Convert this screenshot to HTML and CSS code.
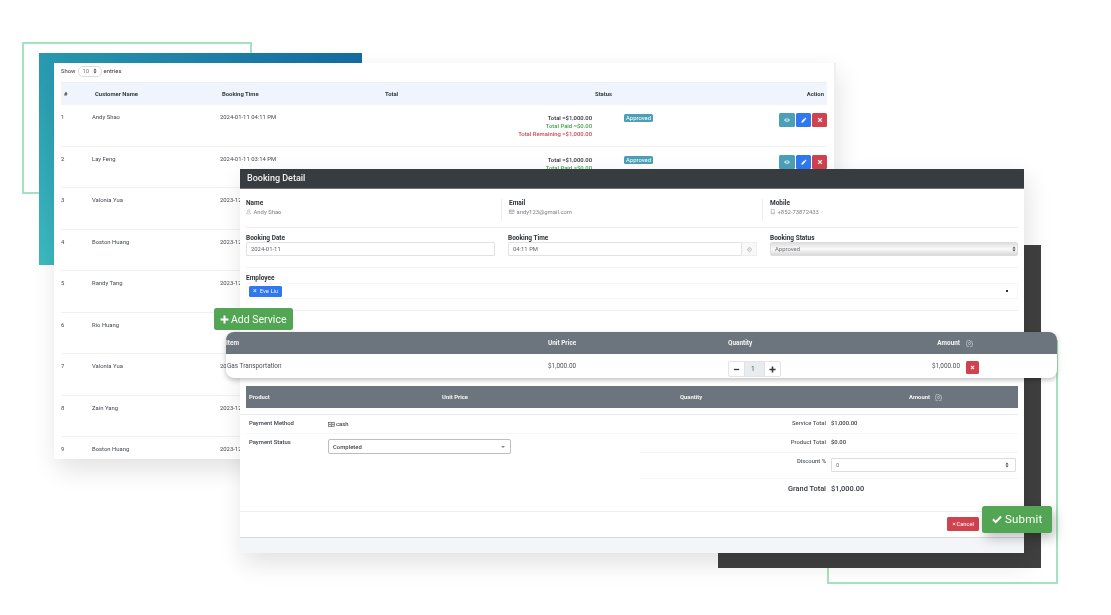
FILE: index.html
```html
<!DOCTYPE html>
<html lang="en">
<head>
    <meta charset="UTF-8">
    <meta name="viewport" content="width=device-width, initial-scale=1.0">
    <title>Booking Detail</title>
    <link rel="stylesheet" href="styles.css">
</head>
<body>
    <svg class="icon-defs" width="0" height="0">
        <symbol id="i-eye" viewBox="0 0 16 16"><path fill="currentColor" d="M8 3C4.4 3 1.6 5.4 0 8c1.6 2.600 4.400 5 8 5s6.400-2.400 8-5c-1.600-2.600-4.400-5-8-5zm0 8.400A3.400 3.400 0 1 1 8 4.600a3.400 3.400 0 0 1 0 6.800zM8 6a2 2 0 1 0 0 4 2 2 0 0 0 0-4z"/></symbol>
        <symbol id="i-pen" viewBox="0 0 16 16"><path fill="currentColor" d="M11.300 1.300l3.400 3.400-1.700 1.700-3.400-3.400zM8.500 4.100l3.400 3.400-7 7L1 15l.5-3.900z"/></symbol>
        <symbol id="i-x" viewBox="0 0 16 16"><path fill="none" stroke="currentColor" stroke-width="3.400" d="M3 3l10 10M13 3L3 13"/></symbol>
        <symbol id="i-plus" viewBox="0 0 16 16"><path fill="none" stroke="currentColor" stroke-width="3.600" d="M8 1v14M1 8h14"/></symbol>
        <symbol id="i-minus" viewBox="0 0 16 16"><path fill="none" stroke="currentColor" stroke-width="3" d="M2 8h12"/></symbol>
        <symbol id="i-check" viewBox="0 0 16 16"><path fill="none" stroke="currentColor" stroke-width="3.200" d="M1.500 8.500l4.500 4.500 8.500-9"/></symbol>
        <symbol id="i-gear" viewBox="0 0 16 16"><g fill="none" stroke="currentColor" stroke-width="1.300"><circle cx="8" cy="8" r="2.400"/><path d="M6.800 1h2.400l.4 2 1.500.7 1.800-1.100 1.600 1.700-1.100 1.700.6 1.500 2 .5v2.200l-2 .5-.6 1.500 1.100 1.700-1.600 1.700-1.800-1.100-1.500.7-.4 2H6.800l-.4-2-1.500-.7-1.800 1.100-1.600-1.700 1.100-1.700-.6-1.500-2-.5V6.500l2-.5.6-1.500L1.500 2.800 3.100 1.100l1.800 1.100L6.400 1.500z"/></g></symbol>
        <symbol id="i-user" viewBox="0 0 16 16"><g fill="none" stroke="currentColor" stroke-width="1.200"><circle cx="8" cy="5" r="3.400"/><path d="M1.500 15c.3-3.400 2.600-5 4.600-5.300M14.500 15c-.3-3.400-2.600-5-4.600-5.300M1.500 15h13"/></g></symbol>
        <symbol id="i-mail" viewBox="0 0 16 16"><g fill="none" stroke="currentColor" stroke-width="1.300"><rect x="1" y="3" width="14" height="10"/><path d="M1 6h14M1 6l7 4 7-4"/></g></symbol>
        <symbol id="i-phone" viewBox="0 0 16 16"><g fill="none" stroke="currentColor" stroke-width="1.300"><rect x="3.500" y="1" width="9" height="14" rx="1"/><path d="M3.500 12h9"/></g></symbol>
        <symbol id="i-clock" viewBox="0 0 16 16"><g fill="none" stroke="currentColor" stroke-width="1.400"><circle cx="8" cy="8" r="6"/><path d="M5 8h3.500V5"/></g></symbol>
        <symbol id="i-cash" viewBox="0 0 16 16"><g fill="none" stroke="currentColor" stroke-width="1.300"><rect x="1" y="3" width="14" height="10"/><path d="M8 3v10"/><circle cx="4.500" cy="8" r="1.500"/><circle cx="11.500" cy="8" r="1.500"/></g></symbol>
        <symbol id="i-updown" viewBox="0 0 8 12"><path fill="currentColor" d="M4 1l3 4H1zM4 11L1 7h6z"/></symbol>
    </svg>

    <div class="stage">
        <div class="outline outline-top"></div>
        <div class="gradient-block"></div>
        <div class="outline outline-bottom"></div>

        <div class="list-window">
            <div class="length-row">
                Show
                <span class="length-select">10 <svg class="arrows"><use href="#i-updown"/></svg></span>
                entries
            </div>
            <table class="booking-table">
                <colgroup>
                    <col class="col-num"><col class="col-name"><col class="col-time">
                    <col class="col-total"><col class="col-status"><col class="col-action">
                </colgroup>
                <thead>
                    <tr>
                        <th class="th-num">#</th>
                        <th class="th-name">Customer Name</th>
                        <th class="th-time">Booking Time</th>
                        <th class="th-total">Total</th>
                        <th class="th-status">Status</th>
                        <th class="th-action">Action</th>
                    </tr>
                </thead>
                <tbody>
                    <tr>
                        <td>1</td><td>Andy Shao</td><td>2024-01-11 04:11 PM</td>
                        <td class="td-total">
                            <div class="sum">Total =$1,000.00</div>
                            <div class="sum paid">Total Paid =$0.00</div>
                            <div class="sum remain">Total Remaining =$1,000.00</div>
                        </td>
                        <td class="td-status"><span class="badge">Approved</span></td>
                        <td class="td-action">
                            <span class="act act-view"><svg><use href="#i-eye"/></svg></span><span class="act act-edit"><svg><use href="#i-pen"/></svg></span><span class="act act-del"><svg><use href="#i-x"/></svg></span>
                        </td>
                    </tr>
                    <tr>
                        <td>2</td><td>Lay Feng</td><td>2024-01-11 03:14 PM</td>
                        <td class="td-total">
                            <div class="sum">Total =$1,000.00</div>
                            <div class="sum paid">Total Paid =$0.00</div>
                        </td>
                        <td class="td-status"><span class="badge">Approved</span></td>
                        <td class="td-action">
                            <span class="act act-view"><svg><use href="#i-eye"/></svg></span><span class="act act-edit"><svg><use href="#i-pen"/></svg></span><span class="act act-del"><svg><use href="#i-x"/></svg></span>
                        </td>
                    </tr>
                    <tr><td>3</td><td>Valonia Yua</td><td>2023-12-28 02:10 PM</td><td></td><td></td><td></td></tr>
                    <tr><td>4</td><td>Boston Huang</td><td>2023-12-28 02:10 PM</td><td></td><td></td><td></td></tr>
                    <tr><td>5</td><td>Randy Tang</td><td>2023-12-28 02:10 PM</td><td></td><td></td><td></td></tr>
                    <tr><td>6</td><td>Rio Huang</td><td>2023-12-28 02:10 PM</td><td></td><td></td><td></td></tr>
                    <tr><td>7</td><td>Valonia Yua</td><td>2023-12-28 02:10 PM</td><td></td><td></td><td></td></tr>
                    <tr><td>8</td><td>Zain Yang</td><td>2023-12-28 02:10 PM</td><td></td><td></td><td></td></tr>
                    <tr><td>9</td><td>Boston Huang</td><td>2023-12-28 02:10 PM</td><td></td><td></td><td></td></tr>
                </tbody>
            </table>
        </div>

        <div class="dark-block"></div>

        <div class="detail-window">
            <div class="detail-head">Booking Detail</div>
            <div class="detail-body">
                <div class="info-row">
                    <div class="info-cell">
                        <div class="label">Name</div>
                        <div class="info-value"><svg><use href="#i-user"/></svg>Andy Shao</div>
                    </div>
                    <div class="info-cell">
                        <div class="label">Email</div>
                        <div class="info-value"><svg><use href="#i-mail"/></svg>andy123@gmail.com</div>
                    </div>
                    <div class="info-cell">
                        <div class="label">Mobile</div>
                        <div class="info-value"><svg><use href="#i-phone"/></svg>+852-73872433</div>
                    </div>
                </div>

                <div class="form-row">
                    <div class="field">
                        <div class="label">Booking Date</div>
                        <div class="input">2024-01-11</div>
                    </div>
                    <div class="field">
                        <div class="label">Booking Time</div>
                        <div class="input-group">
                            <div class="input">04:11 PM</div>
                            <div class="addon"><svg><use href="#i-clock"/></svg></div>
                        </div>
                    </div>
                    <div class="field">
                        <div class="label">Booking Status</div>
                        <div class="status-select">Approved <svg class="arrows"><use href="#i-updown"/></svg></div>
                    </div>
                </div>

                <div class="employee-row">
                    <div class="label">Employee</div>
                    <div class="tag-box">
                        <span class="tag"><span class="tag-x">×</span>Eve Liu</span>
                        <span class="tag-dot"></span>
                    </div>
                </div>

                <div class="product-head">
                    <span>Product</span>
                    <span>Unit Price</span>
                    <span>Quantity</span>
                    <span class="amount">Amount</span>
                    <svg class="gear"><use href="#i-gear"/></svg>
                </div>

                <div class="summary">
                    <div class="summary-left">
                        <div class="pay-row pay-method">
                            <span class="pay-label">Payment Method</span>
                            <span class="pay-value"><svg><use href="#i-cash"/></svg>cash</span>
                        </div>
                        <div class="pay-row pay-status">
                            <span class="pay-label">Payment Status</span>
                            <div class="pay-select">Completed <span class="caret"></span></div>
                        </div>
                    </div>
                    <div class="summary-right">
                        <div class="total-row"><span class="total-label">Service Total</span><span class="total-value">$1,000.00</span></div>
                        <div class="total-row"><span class="total-label">Product Total</span><span class="total-value">$0.00</span></div>
                        <div class="total-row discount-row">
                            <span class="total-label">Discount %</span>
                            <div class="discount-input">0 <svg class="arrows"><use href="#i-updown"/></svg></div>
                        </div>
                        <div class="total-row grand-row"><span class="total-label">Grand Total</span><span class="total-value">$1,000.00</span></div>
                    </div>
                </div>
            </div>
            <div class="detail-foot">
                <span class="cancel-btn"><svg><use href="#i-x"/></svg>Cancel</span>
            </div>
            <div class="detail-strip"></div>
        </div>

        <div class="add-service"><svg><use href="#i-plus"/></svg>Add Service</div>

        <div class="service-card">
            <div class="service-head">
                <span>Item</span>
                <span>Unit Price</span>
                <span>Quantity</span>
                <span class="amount">Amount</span>
                <svg class="gear"><use href="#i-gear"/></svg>
            </div>
            <div class="service-row">
                <span>Gas Transportation</span>
                <span>$1,000.00</span>
                <div class="stepper">
                    <span class="step-btn"><svg><use href="#i-minus"/></svg></span>
                    <span class="step-val">1</span>
                    <span class="step-btn"><svg><use href="#i-plus"/></svg></span>
                </div>
                <span class="amount">$1,000.00</span>
                <span class="row-del"><svg><use href="#i-x"/></svg></span>
            </div>
        </div>

        <div class="submit-btn"><svg><use href="#i-check"/></svg>Submit</div>
    </div>
</body>
</html>
```

FILE: styles.css
```css
* {
    box-sizing: border-box;
}

body {
    margin: 0;
    padding: 0;
    background-color: #ffffff;
    font-family: "Roboto", "Liberation Sans", sans-serif;
    color: #333a40;
}

.icon-defs {
    position: absolute;
}

.stage {
    position: relative;
    width: 1111px;
    height: 615px;
    overflow: hidden;
    filter: blur(0.35px);
}

/* background shapes */
.outline {
    position: absolute;
    border: 2px solid #a3e4be;
}

.outline-top {
    left: 22px;
    top: 42px;
    width: 230px;
    height: 152px;
}

.outline-bottom {
    left: 827px;
    top: 340px;
    width: 231px;
    height: 244px;
}

.gradient-block {
    position: absolute;
    left: 39px;
    top: 53px;
    width: 323px;
    height: 212px;
    background: linear-gradient(to top right, #3cbac0, #2a9db2 45%, #156aa1);
}

.dark-block {
    position: absolute;
    left: 718px;
    top: 245px;
    width: 323px;
    height: 323px;
    background-color: #404040;
}

/* booking list */
.list-window {
    position: absolute;
    left: 54px;
    top: 63px;
    width: 780px;
    height: 396px;
    padding: 0 7px;
    overflow: hidden;
    background-color: #ffffff;
    font-size: 5.9px;
    box-shadow: 2px 0 0 #efefef, 3px 10px 24px rgba(0, 0, 0, 0.12);
}

.length-row {
    display: flex;
    align-items: center;
    gap: 2px;
    height: 16px;
    margin-bottom: 3px;
}

.length-select {
    display: flex;
    align-items: center;
    justify-content: space-between;
    width: 24px;
    height: 11px;
    padding: 0 4px;
    border: 1px solid #dddddd;
    border-radius: 5px;
    color: #777777;
}

.arrows {
    width: 4px;
    height: 6px;
    color: #444444;
}

.booking-table {
    width: 766px;
    table-layout: fixed;
    border-collapse: collapse;
}

.col-num { width: 31px; }
.col-name { width: 128px; }
.col-time { width: 161px; }
.col-total { width: 211px; }
.col-status { width: 91px; }

.booking-table th {
    height: 22px;
    padding: 0;
    background-color: #f0f4fc;
    border-top: 1px solid #e9edf4;
    font-weight: 700;
    text-align: left;
}

.booking-table .th-num,
.booking-table .th-name,
.booking-table .th-status {
    padding-left: 3px;
}

.booking-table .th-time { padding-left: 2px; }
.booking-table .th-total { padding-left: 4px; }
.booking-table .th-action { padding-right: 3px; text-align: right; }

.booking-table td {
    height: 41.5px;
    padding: 9px 0 0;
    border-bottom: 1px solid #f1f1f1;
    vertical-align: top;
    color: #444a50;
}

.booking-table .td-total {
    text-align: right;
}

.sum {
    height: 8.300px;
    line-height: 8px;
    font-weight: 500;
    color: #2b2f33;
}

.paid { color: #47a04f; }
.remain { color: #d0444f; }

.booking-table .td-status {
    padding-left: 32px;
}

.badge {
    display: inline-block;
    padding: 0 2px;
    height: 8px;
    line-height: 8px;
    border-radius: 1.5px;
    background-color: #4ba0b8;
    color: #ffffff;
}

.booking-table .td-action {
    padding-top: 8px;
    text-align: right;
    white-space: nowrap;
    font-size: 0;
}

.act {
    display: inline-flex;
    align-items: center;
    justify-content: center;
    height: 14px;
    margin-left: 1px;
    border-radius: 1.5px;
    color: #ffffff;
}

.act svg {
    width: 6px;
    height: 6px;
}

.act-view { width: 16px; background-color: #4ba0b8; color: #cfe6ed; }
.act-edit { width: 15px; background-color: #2f78f0; }
.act-del { width: 15px; background-color: #cf424e; }

/* booking detail window */
.detail-window {
    position: absolute;
    left: 240px;
    top: 169px;
    width: 784px;
    height: 384px;
    display: flex;
    flex-direction: column;
    background-color: #ffffff;
    font-size: 5.9px;
    box-shadow: 3px 10px 24px rgba(0, 0, 0, 0.12);
}

.detail-head {
    height: 20px;
    padding: 0 7px;
    line-height: 19px;
    background-color: #373c40;
    border-bottom: 1px solid #70757a;
    color: #f0f0f0;
    font-size: 9px;
    font-weight: 500;
}

.detail-body {
    flex: 1;
    padding: 0 6px;
}

.label {
    height: 9px;
    line-height: 9px;
    font-size: 6.5px;
    font-weight: 700;
    color: #2e3338;
}

.info-row {
    display: grid;
    grid-template-columns: 255px 261px 1fr;
    height: 39px;
    padding-top: 10px;
    border-bottom: 1px solid #ececec;
}

.info-cell {
    height: 22px;
    padding-left: 7px;
    border-left: 1px solid #eeeeee;
}

.info-cell:first-child {
    padding-left: 0;
    border-left: 0;
}

.info-value {
    display: flex;
    align-items: center;
    gap: 2px;
    height: 8px;
    color: #7a7f85;
}

.info-value svg {
    width: 5.500px;
    height: 5.500px;
}

.form-row {
    display: grid;
    grid-template-columns: 249px 249px 248px;
    column-gap: 13px;
    height: 40px;
    padding-top: 5px;
    border-bottom: 1.500px solid #f2f2f2;
}

.form-row .label {
    line-height: 10px;
}

.input {
    flex: 1;
    height: 14px;
    padding-left: 4px;
    line-height: 12px;
    border: 1px solid #e2e2e2;
    border-radius: 1px;
    color: #5e6369;
}

.input-group {
    display: flex;
}

.addon {
    display: flex;
    align-items: center;
    justify-content: center;
    width: 15px;
    height: 14px;
    border: 1px solid #eeeeee;
    border-left: 0;
    background-color: #f8f8f8;
    color: #888888;
}

.addon svg {
    width: 5px;
    height: 5px;
}

.status-select {
    display: flex;
    align-items: center;
    justify-content: space-between;
    height: 14px;
    padding: 0 1px 0 4px;
    border: 1px solid #dddddd;
    border-radius: 2px;
    background: linear-gradient(to bottom, #dedede, #fafafa 50%, #d9d9d9);
    color: #6c7177;
}

.employee-row {
    height: 43px;
    padding-top: 6px;
    border-bottom: 1px solid #efefef;
}

.tag-box {
    display: flex;
    align-items: center;
    justify-content: space-between;
    height: 16px;
    padding: 0 9px 0 2px;
    border: 1px solid #f7f7f7;
}

.tag {
    display: flex;
    align-items: center;
    gap: 3px;
    height: 11px;
    padding: 0 4px;
    border-radius: 1.500px;
    background-color: #2f78f0;
    color: #e8f0ff;
}

.tag-x {
    font-size: 7px;
}

.tag-dot {
    width: 2px;
    height: 2px;
    background-color: #333333;
}

.product-head {
    display: grid;
    grid-template-columns: 193px 238px 150px 100px 1fr;
    align-items: center;
    height: 22px;
    margin-top: 75px;
    padding-left: 3px;
    background-color: #6c757d;
    color: #f4f4f4;
    font-weight: 700;
}

.amount {
    text-align: right;
}

.gear {
    width: 7px;
    height: 7px;
    margin-left: 5px;
    color: #dddddd;
}

.summary {
    display: grid;
    grid-template-columns: 400px 1fr;
    margin: 6px 0 0 -6px;
    height: 97px;
    border-top: 1px solid #eaeaea;
}

.summary-left {
    padding-left: 6px;
}

.pay-row {
    display: flex;
    padding-left: 3px;
    color: #3a3f44;
    font-weight: 500;
}

.pay-method {
    height: 19px;
    padding-top: 5px;
    border-bottom: 1px solid #f5f5f5;
}

.pay-status {
    padding-top: 5px;
}

.pay-label {
    width: 79px;
}

.pay-value {
    display: flex;
    align-items: center;
    gap: 1px;
    height: 8px;
}

.pay-value svg {
    width: 7px;
    height: 7px;
}

.pay-select {
    display: flex;
    align-items: center;
    justify-content: space-between;
    width: 183px;
    height: 15px;
    padding: 0 5px 0 4px;
    border: 1px solid #bdbdbd;
    border-radius: 2px;
    color: #444444;
}

.caret {
    width: 0;
    height: 0;
    border-left: 2px solid transparent;
    border-right: 2px solid transparent;
    border-top: 2px solid #888888;
}

.total-row {
    display: flex;
    gap: 5px;
    height: 19px;
    padding-top: 5px;
    border-bottom: 1px solid #f5f5f5;
    font-weight: 500;
    color: #3a3f44;
}

.total-label {
    width: 186px;
    text-align: right;
    color: #555a60;
}

.discount-row {
    height: 26px;
    padding-top: 5px;
}

.discount-input {
    display: flex;
    align-items: center;
    justify-content: space-between;
    width: 185px;
    height: 14px;
    padding: 0 6px 0 4px;
    border: 1px solid #dddddd;
    border-radius: 1px;
    font-weight: 400;
    color: #777777;
}

.grand-row {
    border-bottom: 0;
    padding-top: 5px;
    font-size: 7.400px;
    color: #34393e;
}

.grand-row .total-label {
    color: #34393e;
}

.detail-foot {
    display: flex;
    justify-content: flex-end;
    height: 26px;
    padding: 5px 45px 0 0;
    border-top: 1.500px solid #efefef;
}

.cancel-btn {
    display: flex;
    align-items: center;
    justify-content: center;
    gap: 0.500px;
    width: 32px;
    height: 14px;
    border-radius: 1.500px;
    background-color: #cf424e;
    color: #f8e8e8;
    font-size: 5.700px;
    font-weight: 500;
}

.cancel-btn svg {
    width: 4px;
    height: 4px;
}

.detail-strip {
    height: 16px;
    border-top: 1px solid #d9d9dd;
    background-color: #f3f5f9;
}

/* things that float over the detail window */
.add-service,
.submit-btn {
    position: absolute;
    display: flex;
    align-items: center;
    border-radius: 2.500px;
    background-color: #52a653;
    color: #ffffff;
}

.add-service {
    left: 214px;
    top: 308px;
    width: 79px;
    height: 22px;
    gap: 2px;
    padding-left: 6px;
    font-size: 10.500px;
}

.add-service svg {
    width: 9px;
    height: 9px;
}

.submit-btn {
    left: 982px;
    top: 506px;
    width: 70px;
    height: 27px;
    gap: 3px;
    padding: 0 0 2px 10px;
    font-size: 11.500px;
    letter-spacing: 0.2px;
    box-shadow: 3px 5px 12px rgba(0, 0, 0, 0.25);
}

.submit-btn svg {
    width: 10px;
    height: 10px;
}

.service-card {
    position: absolute;
    left: 226px;
    top: 332px;
    width: 831px;
    height: 46px;
    border-radius: 8px;
    background-color: #ffffff;
    box-shadow: 0 2px 5px rgba(0, 0, 0, 0.25);
    font-size: 6.4px;
}

.service-head,
.service-row {
    display: grid;
    grid-template-columns: 322px 180px 150px 82px 1fr;
    align-items: center;
}

.service-head {
    height: 22px;
    border-radius: 8px 8px 0 0;
    background-color: #6c757d;
    color: #f4f4f4;
    font-weight: 700;
}

.service-head .gear {
    margin-left: 6px;
}

.service-row {
    height: 24px;
    grid-template-columns: 321px 180px 150px 82px 1fr;
    padding-left: 1px;
    color: #4a4f55;
}

.stepper {
    display: flex;
    align-items: center;
    width: 53px;
    height: 16px;
    margin-top: 6px;
    border: 1px solid #e4e4e4;
    border-radius: 2px;
}

.step-btn {
    display: flex;
    align-items: center;
    justify-content: center;
    width: 15px;
    height: 100%;
    color: #33383d;
}

.step-btn svg {
    width: 7px;
    height: 7px;
}

.step-val {
    flex: 1;
    height: 100%;
    padding-left: 6px;
    line-height: 14px;
    background-color: #e9ecef;
    border: 1px solid #dee2e6;
    border-width: 0 1px;
}

.row-del {
    display: flex;
    align-items: center;
    justify-content: center;
    width: 13px;
    height: 13px;
    margin: 3px 0 0 6px;
    border-radius: 1.500px;
    background-color: #cf424e;
    color: #ffffff;
}

.row-del svg {
    width: 5px;
    height: 5px;
}
```
